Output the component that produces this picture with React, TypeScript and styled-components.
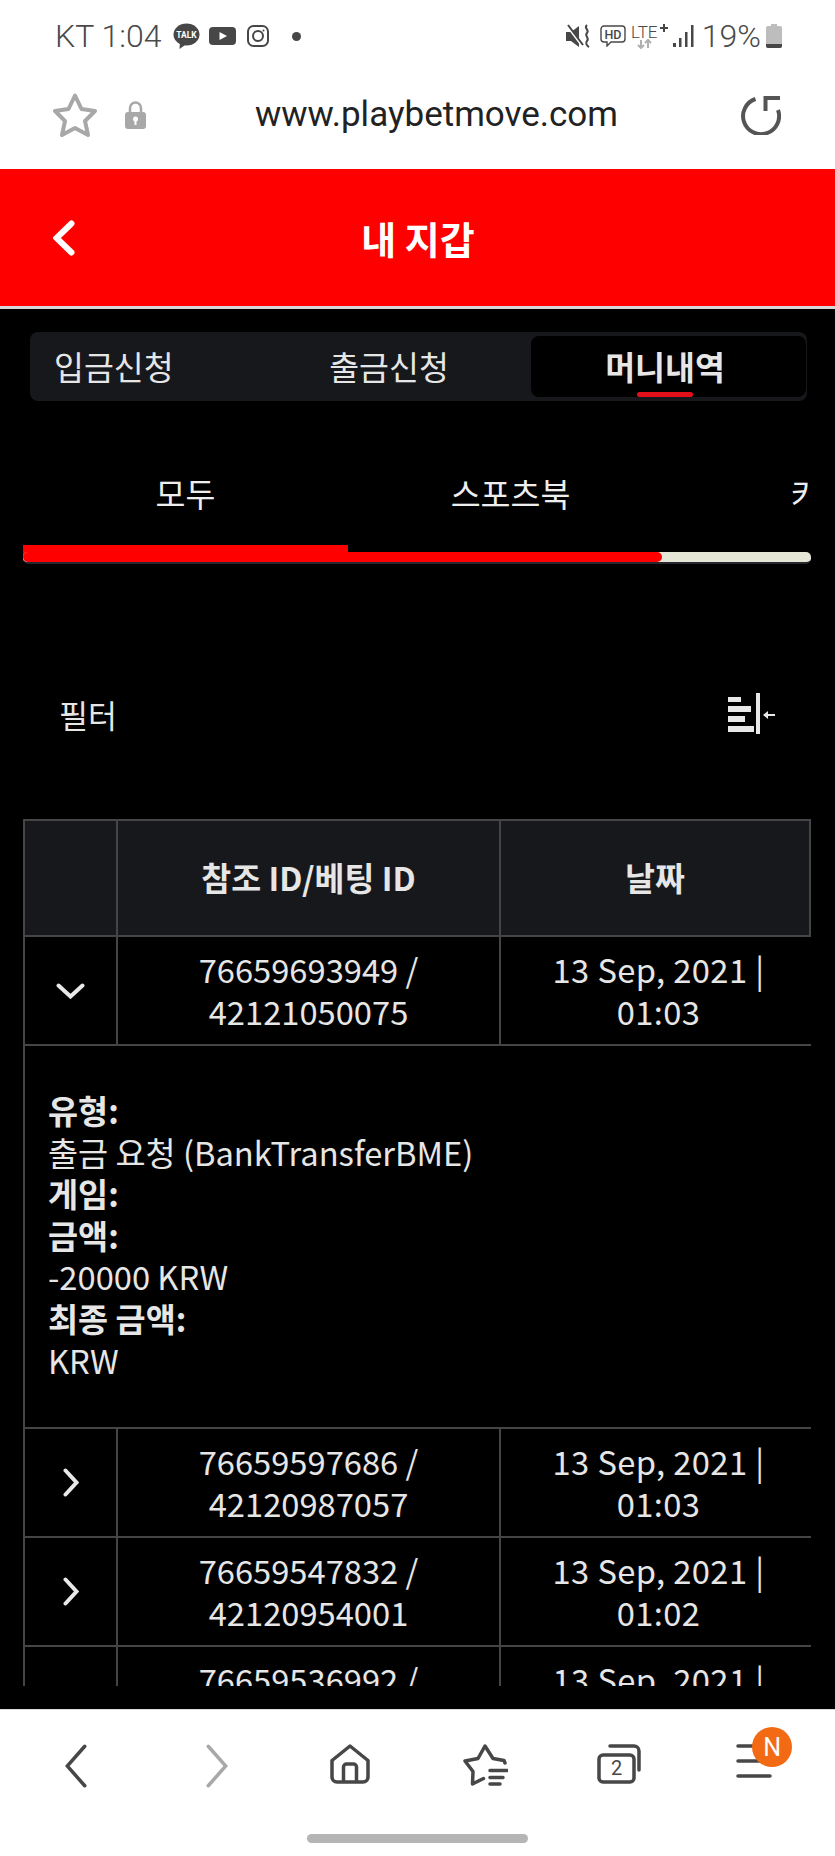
import * as React from 'react';
import styled, { createGlobalStyle } from 'styled-components';

const GlobalStyle = createGlobalStyle`
	html, body {
		margin: 0;
		padding: 0;
		background: #fff;
	}

	* {
		box-sizing: border-box;
	}
`;

const cjk = '"Noto Sans CJK KR", "Noto Sans", sans-serif';
const lineColor = '#454545';

const Page = styled.div`
	width: 835px;
	height: 1856px;
	display: flex;
	flex-direction: column;
	overflow: hidden;
	font-family: ${cjk};
`;

const StatusBar = styled.div`
	height: 70px;
	display: flex;
	align-items: center;
	padding: 2px 53px 0 55px;
	color: #4a4a4a;
	font-family: Roboto, sans-serif;
	font-size: 32px;
	font-weight: 300;
`;

const StatusSlot = styled.span<{ $gap: number }>`
	display: flex;
	align-items: center;
	margin-left: ${props => props.$gap}px;
`;

const StatusRight = styled.div`
	display: flex;
	align-items: center;
	margin-left: auto;
`;

const UrlBar = styled.div`
	height: 99px;
	display: flex;
	align-items: center;
	gap: 28px;
	padding: 0 54px 10px 53px;
`;

const UrlText = styled.div`
	flex: 1;
	padding-right: 14px;
	text-align: center;
	font-family: Roboto, sans-serif;
	font-size: 35px;
	color: #222;
`;

const TitleBar = styled.div`
	height: 140px;
	flex: none;
	display: flex;
	align-items: center;
	position: relative;
	padding-left: 53px;
	background: #f00;
	border-bottom: 3px solid #d8d8d8;
`;

const Title = styled.h1`
	position: absolute;
	left: 0;
	right: 0;
	margin: 0;
	padding-left: 1px;
	text-align: center;
	color: #fff;
	font-size: 38px;
	font-weight: 700;
`;

const Main = styled.div`
	flex: 1;
	min-height: 0;
	display: flex;
	flex-direction: column;
	padding-top: 23px;
	background: #000;
	color: #e6e6e6;
`;

const WalletTabs = styled.div`
	height: 69px;
	margin: 0 28px 0 30px;
	padding: 4px 1px 4px 0;
	display: grid;
	grid-template-columns: 217px 284px 1fr;
	background: #17181c;
	border-radius: 8px;
`;

const WalletTab = styled.div<{ $active?: boolean; $first?: boolean }>`
	position: relative;
	display: flex;
	align-items: center;
	justify-content: ${props => (props.$first ? 'flex-start' : 'center')};
	padding-left: ${props => (props.$first ? '24px' : '0')};
	padding-right: ${props => (props.$active ? '7px' : '0')};
	padding-bottom: 3px;
	font-size: 32.5px;
	font-weight: ${props => (props.$active ? 700 : 400)};
	white-space: nowrap;
	background: ${props => (props.$active ? '#000' : 'transparent')};
	border-radius: 8px;

	${props => props.$active && `
		&:after {
			content: '';
			position: absolute;
			bottom: 0;
			left: 106px;
			width: 56px;
			height: 5px;
			border-radius: 3px;
			background: #e3101a;
		}
	`}
`;

const GameTabs = styled.div`
	margin: 65px 24px 0 23px;
	display: flex;
	overflow: hidden;
`;

const GameTab = styled.div<{ $active?: boolean }>`
	flex: none;
	width: 325px;
	height: 89px;
	padding-top: 4px;
	text-align: center;
	font-size: 32.5px;
	line-height: 46px;
	color: #eee;
	border-bottom: 10px solid ${props => (props.$active ? '#f00' : 'transparent')};
`;

const ProgressTrack = styled.div`
	height: 12px;
	margin: -3px 24px 0 23px;
	border-bottom: 2px solid #26262c;
	border-radius: 5px;
	background: #e6e6d6;
`;

const ProgressFill = styled.div<{ $value: number }>`
	width: ${props => props.$value}px;
	height: 100%;
	border-radius: 5px;
	background: #f00;
`;

const FilterRow = styled.div`
	margin-top: 129px;
	padding: 0 60px 0 59px;
	display: flex;
	align-items: center;
	justify-content: space-between;
	height: 41px;
	font-size: 31.5px;
`;

const TableClip = styled.div`
	height: 867px;
	margin: 85px 24px 0 23px;
	overflow: hidden;
`;

const TableHead = styled.div`
	height: 118px;
	display: grid;
	grid-template-columns: 91px 383px 1fr;
	background: #17181c;
	border: 2px solid ${lineColor};
`;

const HeadCell = styled.div`
	display: flex;
	align-items: center;
	justify-content: center;
	padding-bottom: 3px;
	font-size: 32.5px;
	font-weight: 700;
	border-left: 2px solid ${lineColor};

	&:first-child {
		border-left: 0;
	}
`;

const Row = styled.div`
	height: 109px;
	display: grid;
	grid-template-columns: 91px 383px 1fr;
	border-left: 2px solid ${lineColor};
	border-bottom: 2px solid ${lineColor};
`;

const ToggleCell = styled.div`
	display: flex;
	align-items: center;
	justify-content: center;
`;

const DataCell = styled.div<{ $date?: boolean }>`
	padding: 11px 0 0 ${props => (props.$date ? '5px' : '0')};
	text-align: center;
	font-size: 32.7px;
	line-height: 41.6px;
	letter-spacing: ${props => (props.$date ? '0.4px' : '0')};
	white-space: nowrap;
	border-left: 2px solid ${lineColor};
`;

const Detail = styled.div`
	height: 383px;
	padding: 43px 0 0 23px;
	font-size: 32.7px;
	line-height: 41.6px;
	border-left: 2px solid ${lineColor};
	border-bottom: 2px solid ${lineColor};
`;

const DetailLabel = styled.div`
	font-weight: 700;
`;

const BottomBar = styled.div`
	height: 147px;
	flex: none;
	display: flex;
	flex-direction: column;
	background: #fff;
	border-top: 1px solid #ddd;
`;

const NavIcons = styled.div`
	display: grid;
	grid-template-columns: repeat(6, 1fr);
	padding: 34px 10px 0;
	height: 124px;
	align-items: flex-start;
	justify-items: center;
`;

const NavItem = styled.div<{ $nudge?: number }>`
	position: relative;
	display: flex;
	margin-left: ${props => (props.$nudge || 0) * 2}px;
`;

const Badge = styled.div`
	position: absolute;
	top: -17px;
	right: -20px;
	width: 40px;
	height: 40px;
	display: flex;
	align-items: center;
	justify-content: center;
	border-radius: 50%;
	background: #f26a13;
	color: #fff;
	font-family: Roboto, sans-serif;
	font-size: 25px;
`;

const HomeIndicator = styled.div`
	width: 221px;
	height: 9px;
	margin: 0 auto;
	border-radius: 5px;
	background: #b5b5b5;
`;

const rows = [
	{ id: 'r1', open: true, ref: '76659693949', bet: '42121050075', time: '01:03' },
	{ id: 'r2', ref: '76659597686', bet: '42120987057', time: '01:03' },
	{ id: 'r3', ref: '76659547832', bet: '42120954001', time: '01:02' },
	{ id: 'r4', ref: '76659536992' },
];

const dark = '#474747';

const TalkIcon = () => (
	<svg width="27" height="27" viewBox="0 0 27 27">
		<ellipse cx="13.5" cy="11.5" rx="13" ry="11" fill={dark} />
		<path d="M7 19l-.5 7 7-5z" fill={dark} />
		<text x="13.5" y="15" textAnchor="middle" fontSize="8.5" fontWeight="700" fill="#fff" fontFamily="Roboto, sans-serif">TALK</text>
	</svg>
);

const YoutubeIcon = () => (
	<svg width="27" height="18" viewBox="0 0 27 18">
		<rect width="27" height="18" rx="4" fill={dark} />
		<path d="M10.5 5l7.5 4-7.5 4z" fill="#fff" />
	</svg>
);

const InstagramIcon = () => (
	<svg width="22" height="22" viewBox="0 0 22 22" fill="none" stroke={dark} strokeWidth="2">
		<rect x="1" y="1" width="20" height="20" rx="5.5" />
		<circle cx="11" cy="11" r="5" />
		<circle cx="16.5" cy="5.5" r="1" fill={dark} stroke="none" />
	</svg>
);

const Dot = () => (
	<svg width="9" height="9" viewBox="0 0 9 9">
		<circle cx="4.5" cy="4.5" r="4.5" fill={dark} />
	</svg>
);

const MuteIcon = () => (
	<svg width="25" height="25" viewBox="0 0 25 25">
		<path d="M0 8h5L13 2v21l-8-6H0z" fill={dark} />
		<path d="M1 2l15 20" stroke="#fff" strokeWidth="2" />
		<path d="M2 1l15 20" stroke={dark} strokeWidth="2" />
		<path d="M21 1c-4 3 3 5 0 8-3 3 3 5 0 8-2 2 0 5 2 6" fill="none" stroke={dark} strokeWidth="2" />
	</svg>
);

const HdIcon = () => (
	<svg width="26" height="22" viewBox="0 0 26 22" fill="none">
		<path d="M4 1h18a3 3 0 013 3v10a3 3 0 01-3 3H11l-4 4v-4H4a3 3 0 01-3-3V4a3 3 0 013-3z" stroke={dark} strokeWidth="1.4" />
		<text x="13" y="13.5" textAnchor="middle" fontSize="12.5" fontWeight="500" fill={dark} fontFamily="Roboto, sans-serif">HD</text>
	</svg>
);

const LteIcon = () => (
	<svg width="37" height="26" viewBox="0 0 37 26">
		<text x="0" y="15" fontSize="17" fill={dark} fontFamily="Roboto, sans-serif">LTE</text>
		<path d="M33 1v8M29 5h8" stroke={dark} strokeWidth="2" />
		<path d="M10 17v8M7 22l3 3 3-3M17 25v-8M14 20l3-3 3 3" fill="none" stroke="#b0b0b0" strokeWidth="2" />
	</svg>
);

const SignalIcon = () => (
	<svg width="21" height="22" viewBox="0 0 21 22">
		<rect x="0" y="18" width="3" height="4" fill={dark} />
		<rect x="6" y="13" width="2.5" height="9" fill={dark} />
		<rect x="12" y="7" width="2.5" height="15" fill={dark} />
		<rect x="18" y="0" width="2.5" height="22" fill={dark} />
	</svg>
);

const BatteryIcon = () => (
	<svg width="16" height="24" viewBox="0 0 16 24">
		<path d="M5 0h6v2h3a2 2 0 012 2v18a2 2 0 01-2 2H2a2 2 0 01-2-2V4a2 2 0 012-2h3z" fill="#bdbdbd" />
		<path d="M0 20h16v2a2 2 0 01-2 2H2a2 2 0 01-2-2z" fill={dark} />
	</svg>
);

const StarIcon = () => (
	<svg width="44" height="44" viewBox="0 0 44 44" fill="none" stroke="#a8a8a8" strokeWidth="4" strokeLinejoin="round">
		<path d="M22 2.5l6.5 13.5 13.5 2-10 10 3 14-13-7-13 7 3-14-10-10 13.500-2z" />
	</svg>
);

const LockIcon = () => (
	<svg width="21" height="28" viewBox="0 0 21 28">
		<path d="M5 12V7a5.500 5.500 0 0111 0v5" fill="none" stroke="#a8a8a8" strokeWidth="2.500" />
		<rect x="0" y="11" width="21" height="17" rx="3" fill="#a8a8a8" />
		<circle cx="10.500" cy="18" r="2.500" fill="#fff" />
		<rect x="9.500" y="18" width="2" height="6" fill="#fff" />
	</svg>
);

const ReloadIcon = () => (
	<svg width="40" height="40" viewBox="0 0 40 40" fill="none" stroke="#555" strokeWidth="4">
		<path d="M14.500 4A18 18 0 1037 15" />
		<path d="M39 3H24.500v13" />
	</svg>
);

const Chevron = ({ dir, size, stroke, color }: { dir: 'left' | 'right' | 'down'; size: [number, number]; stroke: number; color: string }) => {
	const [w, h] = size;
	const p = stroke / 2 + 0.5;
	const d = dir === 'left'
		? `M${w - p} ${p}L${p} ${h / 2}L${w - p} ${h - p}`
		: dir === 'right'
			? `M${p} ${p}L${w - p} ${h / 2}L${p} ${h - p}`
			: `M${p} ${p}L${w / 2} ${h - p}L${w - p} ${p}`;
	return (
		<svg width={w} height={h} viewBox={`0 0 ${w} ${h}`} fill="none" stroke={color} strokeWidth={stroke} strokeLinecap="round" strokeLinejoin="miter">
			<path d={d} />
		</svg>
	);
};

const FilterIcon = () => (
	<svg width="47" height="41" viewBox="0 0 47 41" fill="#e8e8e8">
		<rect x="0" y="4" width="13" height="5" />
		<rect x="0" y="13" width="23" height="6" />
		<rect x="0" y="23" width="17" height="6" />
		<rect x="0" y="33" width="26" height="6" />
		<rect x="28" y="0" width="4" height="41" />
		<path d="M35 22l5-4v3h7v2h-7v3z" />
	</svg>
);

const HomeIcon = () => (
	<svg width="40" height="40" viewBox="0 0 40 40" fill="none" stroke={dark} strokeWidth="3.500" strokeLinejoin="round">
		<path d="M20 2L38 16.500V33a5 5 0 01-5 5H7a5 5 0 01-5-5V16.500z" />
		<path d="M13.500 38V23a3 3 0 013-3h7a3 3 0 013 3v15" />
	</svg>
);

const BookmarksIcon = () => (
	<svg width="45" height="42" viewBox="0 0 45 42" fill="none" stroke={dark} strokeWidth="3.500" strokeLinecap="round" strokeLinejoin="round">
		<path d="M42 19l-1-2.500L30 14.500 22 2l-7 12.500L2 17l8 10.500L9.500 40l11-5.500" />
		<path d="M27 26.500h17M27 33.500h13M27 40h10" />
	</svg>
);

const TabsIcon = () => (
	<svg width="45" height="40" viewBox="0 0 45 40" fill="none" stroke={dark} strokeWidth="3.500" strokeLinecap="round">
		<rect x="2" y="11" width="35" height="27" rx="4" />
		<path d="M13 2h24a5 5 0 015 5v19" />
		<text x="19.500" y="31" textAnchor="middle" fontSize="20" fill={dark} stroke="none" fontFamily="Roboto, sans-serif">2</text>
	</svg>
);

const MenuIcon = () => (
	<svg width="36" height="34" viewBox="0 0 36 34" fill="none" stroke={dark} strokeWidth="3.500" strokeLinecap="round">
		<path d="M2 2h32M2 17h32M2 32h32" />
	</svg>
);

export default function App() {
	return (
		<Page>
			<GlobalStyle />
			<StatusBar>
				<span>KT 1:04</span>
				<StatusSlot $gap={12}><TalkIcon /></StatusSlot>
				<StatusSlot $gap={9}><YoutubeIcon /></StatusSlot>
				<StatusSlot $gap={11}><InstagramIcon /></StatusSlot>
				<StatusSlot $gap={23}><Dot /></StatusSlot>
				<StatusRight>
					<StatusSlot $gap={0}><MuteIcon /></StatusSlot>
					<StatusSlot $gap={9}><HdIcon /></StatusSlot>
					<StatusSlot $gap={5}><LteIcon /></StatusSlot>
					<StatusSlot $gap={5}><SignalIcon /></StatusSlot>
					<StatusSlot $gap={8}>19%</StatusSlot>
					<StatusSlot $gap={5}><BatteryIcon /></StatusSlot>
				</StatusRight>
			</StatusBar>
			<UrlBar>
				<StarIcon />
				<LockIcon />
				<UrlText>www.playbetmove.com</UrlText>
				<ReloadIcon />
			</UrlBar>
			<TitleBar>
				<Chevron dir="left" size={[22, 36]} stroke={6} color="#fff" />
				<Title>내 지갑</Title>
			</TitleBar>
			<Main>
				<WalletTabs>
					<WalletTab $first>입금신청</WalletTab>
					<WalletTab>출금신청</WalletTab>
					<WalletTab $active>머니내역</WalletTab>
				</WalletTabs>
				<GameTabs>
					<GameTab $active>모두</GameTab>
					<GameTab>스포츠북</GameTab>
					<GameTab>카지노</GameTab>
				</GameTabs>
				<ProgressTrack>
					<ProgressFill $value={639} />
				</ProgressTrack>
				<FilterRow>
					<span>필터</span>
					<FilterIcon />
				</FilterRow>
				<TableClip>
					<TableHead>
						<HeadCell />
						<HeadCell>참조 ID/베팅 ID</HeadCell>
						<HeadCell>날짜</HeadCell>
					</TableHead>
					{rows.map(row => (
						<React.Fragment key={row.id}>
							<Row>
								<ToggleCell>
									{row.open
										? <Chevron dir="down" size={[29, 16]} stroke={4} color="#e8e8e8" />
										: <Chevron dir="right" size={[16, 29]} stroke={4} color="#e8e8e8" />}
								</ToggleCell>
								<DataCell>
									{row.ref} /
									{row.bet && <br />}
									{row.bet}
								</DataCell>
								<DataCell $date>
									13 Sep, 2021 |
									{row.time && <br />}
									{row.time}
								</DataCell>
							</Row>
							{row.open && (
								<Detail>
									<DetailLabel>유형:</DetailLabel>
									<div>출금 요청 (BankTransferBME)</div>
									<DetailLabel>게임:</DetailLabel>
									<DetailLabel>금액:</DetailLabel>
									<div>-20000 KRW</div>
									<DetailLabel>최종 금액:</DetailLabel>
									<div>KRW</div>
								</Detail>
							)}
						</React.Fragment>
					))}
				</TableClip>
			</Main>
			<BottomBar>
				<NavIcons>
					<NavItem $nudge={-2}><Chevron dir="left" size={[22, 44]} stroke={3.5} color={dark} /></NavItem>
					<NavItem $nudge={3}><Chevron dir="right" size={[22, 44]} stroke={3.5} color="#a8a8a8" /></NavItem>
					<NavItem><HomeIcon /></NavItem>
					<NavItem><BookmarksIcon /></NavItem>
					<NavItem $nudge={-2}><TabsIcon /></NavItem>
					<NavItem $nudge={-3}>
						<MenuIcon />
						<Badge>N</Badge>
					</NavItem>
				</NavIcons>
				<HomeIndicator />
			</BottomBar>
		</Page>
	);
}
